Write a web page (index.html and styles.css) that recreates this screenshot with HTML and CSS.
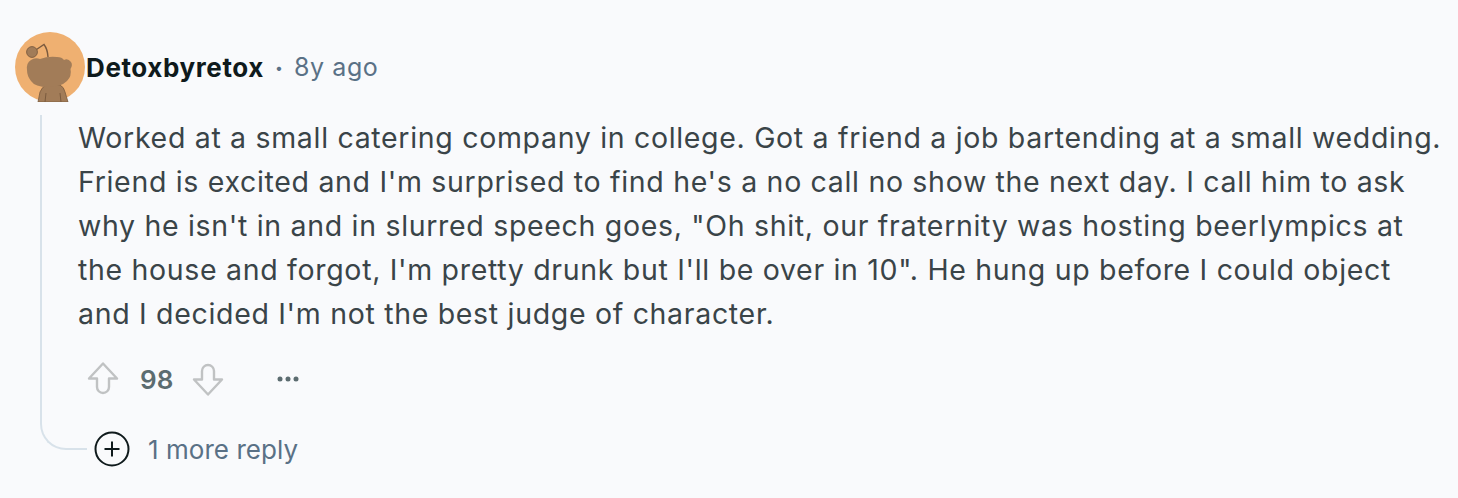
FILE: index.html
```html
<!DOCTYPE html>
<html lang="en">
<head>
<meta charset="utf-8">
<title>Comment</title>
<link rel="stylesheet" href="styles.css">
</head>
<body>
<article class="comment">
  <header class="head">
    <svg class="avatar" viewBox="0 0 70 70" aria-hidden="true">
      <circle cx="35" cy="35" r="35" fill="#efb071"/>
      <path d="M21.500 17.500 L29 12.500 Q32.500 17 33 25" fill="none" stroke="#7a5a3e" stroke-width="1.400"/>
      <circle cx="17" cy="20" r="5.400" fill="#a27c58" stroke="#7a5a3e" stroke-width="0.900"/>
      <path d="M23 70 L25 60 Q27 55 31 53 L45 53 Q49 55 50 60 L53 70 Z" fill="#a27c58" stroke="#7a5a3e" stroke-width="0.800"/>
      <path d="M30 70 L31 61 M46 70 L45 61" stroke="#7a5a3e" stroke-width="1" fill="none"/>
      <path d="M12 38 Q11 31 16 28 Q20 25 25 27 Q33 24 42 25 Q47 25 49 28 Q53 26 56 30 Q58 33 55.500 37 Q57 44 52 49 Q46 55 33 55 Q20 55 16 49 Q12 44 12 38 Z" fill="#a27c58"/>
    </svg>
    <span class="author">Detoxbyretox</span>
    <span class="dot">•</span>
    <time class="age">8y ago</time>
  </header>
  <div class="thread">
    <div class="rail"></div>
    <div class="content">
      <p class="text">Worked at a small catering company in college. Got a friend a job bartending at a small wedding.<br>Friend is excited and I'm surprised to find he's a no call no show the next day. I call him to ask<br>why he isn't in and in slurred speech goes, "Oh shit, our fraternity was hosting beerlympics at<br>the house and forgot, I'm pretty drunk but I'll be over in 10". He hung up before I could object<br>and I decided I'm not the best judge of character.</p>
      <div class="actions">
        <svg class="vote up" viewBox="0 0 34 34" aria-hidden="true"><path d="M17 2.500 L31 17.500 L23 17.500 L23 26 A6 6 0 0 1 11 26 L11 17.500 L3 17.500 Z" fill="none" stroke="#c0c2c3" stroke-width="2.400" stroke-linejoin="round"/></svg>
        <span class="score">98</span>
        <svg class="vote down" viewBox="0 0 34 34" aria-hidden="true"><path d="M17 31.500 L31 16.500 L23 16.500 L23 8 A6 6 0 0 0 11 8 L11 16.500 L3 16.500 Z" fill="none" stroke="#c0c2c3" stroke-width="2.400" stroke-linejoin="round"/></svg>
        <svg class="more-icon" viewBox="0 0 22 6" aria-hidden="true"><circle cx="3" cy="3" r="2.500"/><circle cx="11" cy="3" r="2.500"/><circle cx="19" cy="3" r="2.500"/></svg>
      </div>
    </div>
  </div>
  <div class="replies">
    <div class="elbow"></div>
    <svg class="plus" viewBox="0 0 36 36" aria-hidden="true"><circle cx="18" cy="18" r="16.500" fill="none" stroke="#0f1a1c" stroke-width="2"/><path d="M18 10.500 V25.500 M10.500 18 H25.500" stroke="#0f1a1c" stroke-width="2"/></svg>
    <span class="more-text">1 more reply</span>
  </div>
</article>
</body>
</html>
```

FILE: styles.css
```css
* { box-sizing: border-box; }
html, body { margin: 0; padding: 0; }
body {
  width: 1458px;
  height: 498px;
  overflow: hidden;
  background: #f9fafc;
  font-family: Inter, "Liberation Sans", sans-serif;
  font-optical-sizing: none;
}
.comment { padding-top: 32px; }
.head {
  display: flex;
  align-items: center;
  height: 70px;
  padding-left: 15px;
}
.avatar { width: 70px; height: 70px; flex: none; }
.author {
  margin-left: 1px;
  font-size: 26px;
  font-weight: 700;
  letter-spacing: 0.6px;
  color: #0f1a1c;
}
.dot {
  margin-left: 11px;
  font-size: 14px;
  color: #5a7186;
}
.age {
  margin-left: 11px;
  font-size: 25px;
  letter-spacing: 0.6px;
  color: #5a7186;
}
.thread { display: flex; margin-top: 13px; }
.rail {
  flex: none;
  width: 2px;
  margin-left: 40px;
  margin-bottom: 17px;
  background: #d8e2ea;
}
.content { margin-left: 36px; padding-bottom: 36px; }
.text {
  margin: 0;
  padding-top: 1px;
  font-size: 28.5px;
  line-height: 44px;
  letter-spacing: 0.68px;
  color: #3a4448;
  white-space: nowrap;
}
.actions {
  display: flex;
  align-items: center;
  height: 40px;
  margin-top: 23px;
  padding-left: 8px;
}
.vote { width: 34px; height: 34px; flex: none; }
.vote.up { margin-bottom: 2px; }
.score {
  margin-left: 20px;
  font-size: 26px;
  font-weight: 600;
  color: #5c6c70;
}
.vote.down { margin-left: 18px; margin-top: 2px; }
.more-icon { width: 22px; height: 6px; margin-left: 52px; fill: #5c6c70; }
.replies {
  display: flex;
  align-items: center;
  height: 36px;
  margin-top: -4px;
  padding-left: 40px;
}
.elbow {
  flex: none;
  align-self: flex-start;
  width: 47px;
  height: 36px;
  margin-top: -17px;
  border-left: 2px solid #d8e2ea;
  border-bottom: 2px solid #d8e2ea;
  border-bottom-left-radius: 26px;
}
.plus { width: 36px; height: 36px; margin-left: 7px; flex: none; }
.more-text {
  margin-left: 18px;
  font-size: 26px;
  letter-spacing: 0.05px;
  color: #5a7186;
}
```
